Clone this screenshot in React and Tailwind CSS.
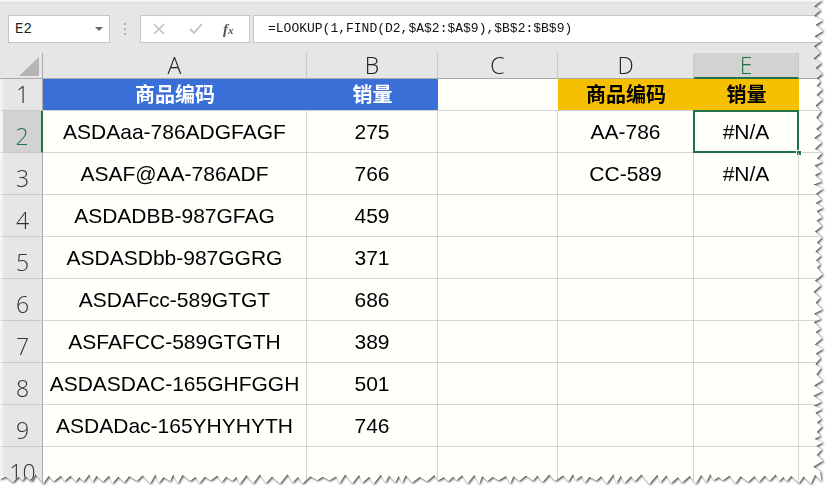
import React from 'react';

const rows = [
  ['ASDAaa-786ADGFAGF', '275', '', 'AA-786', '#N/A'],
  ['ASAF@AA-786ADF', '766', '', 'CC-589', '#N/A'],
  ['ASDADBB-987GFAG', '459', '', '', ''],
  ['ASDASDbb-987GGRG', '371', '', '', ''],
  ['ASDAFcc-589GTGT', '686', '', '', ''],
  ['ASFAFCC-589GTGTH', '389', '', '', ''],
  ['ASDASDAC-165GHFGGH', '501', '', '', ''],
  ['ASDADac-165YHYHYTH', '746', '', '', ''],
  ['', '', '', '', ''],
];

const font = { fontFamily: '"Liberation Sans", "Noto Sans CJK SC", sans-serif' };

// jagged "torn paper" outline along the right and bottom edges
function tornEdge() {
  let seed = 11;
  const rnd = () => {
    seed = (seed * 9301 + 49297) % 233280;
    return seed / 233280;
  };
  const pts = ['0px 0px'];
  let i = 0;
  for (let y = 0; y < 474; y += 3 + rnd() * 4) {
    const x = i % 2 === 0 ? 820 + rnd() * 3 : 813 + rnd() * 4;
    pts.push(`${x.toFixed(1)}px ${y.toFixed(1)}px`);
    i++;
  }
  pts.push('821px 481px');
  i = 0;
  for (let x = 815; x > 0; x -= 3 + rnd() * 5) {
    const y = i % 2 === 0 ? 474 + rnd() * 3 : 480 + rnd() * 4;
    pts.push(`${x.toFixed(1)}px ${y.toFixed(1)}px`);
    i++;
  }
  pts.push('0px 479px');
  return `polygon(${pts.join(',')})`;
}

const clip = tornEdge();

export default function App() {
  return (
    <div className="w-[835px] h-[494px] bg-white overflow-hidden">
      <div className="[filter:drop-shadow(1px_1px_1px_rgba(0,0,0,0.75))]">
        <div className="w-[826px] h-[490px] bg-[#e6e6e6] flex flex-col" style={{ clipPath: clip }}>
          {/* Top strip */}
          <div className="h-[3px] bg-[#f6f6f6] border-b border-[#dcdcdc]" />

          {/* Formula bar */}
          <div className="h-[50px] flex items-start pt-[12px] pl-[8px]">
            <div className="w-[102px] h-[28px] bg-[#fffffd] border border-[#c6c6c6] flex items-center justify-between pl-[6px] pr-[6px]">
              <span className="text-[14px] text-[#222]" style={{ fontFamily: '"Liberation Mono", monospace' }}>E2</span>
              <span className="w-0 h-0 border-l-[4px] border-r-[4px] border-t-[4px] border-l-transparent border-r-transparent border-t-[#666]" />
            </div>
            <div className="w-[30px] h-[28px] flex flex-col items-center justify-center gap-[3px]">
              <span className="w-[2px] h-[2px] bg-[#b0b0b0]" />
              <span className="w-[2px] h-[2px] bg-[#b0b0b0]" />
              <span className="w-[2px] h-[2px] bg-[#b0b0b0]" />
            </div>
            <div className="w-[110px] h-[28px] bg-[#fffffd] border border-[#c6c6c6] flex items-center">
              <svg width="12" height="12" viewBox="0 0 12 12" className="ml-[12px]">
                <path d="M1 1 L11 11 M11 1 L1 11" stroke="#c2c2c2" strokeWidth="1.6" fill="none" />
              </svg>
              <svg width="14" height="12" viewBox="0 0 14 12" className="ml-[24px]">
                <path d="M1 6 L5 10 L13 1" stroke="#c2c2c2" strokeWidth="1.8" fill="none" />
              </svg>
              <span className="ml-[20px] text-[15px] italic font-bold text-[#555]" style={{ fontFamily: '"Liberation Serif", serif' }}>
                f<span className="text-[11px]">x</span>
              </span>
            </div>
            <div className="flex-1 ml-[3px] h-[28px] bg-[#fffffd] border border-[#c6c6c6] flex items-center pl-[14px]">
              <span className="text-[13px] text-[#111] whitespace-nowrap" style={{ fontFamily: '"Liberation Mono", monospace' }}>
                =LOOKUP(1,FIND(D2,$A$2:$A$9),$B$2:$B$9)
              </span>
            </div>
          </div>

          {/* Sheet */}
          <div
            className="grid grid-cols-[43px_264px_131px_120px_136px_105px_1fr] grid-rows-[26px_32px_repeat(9,42px)] bg-[#fffffc]"
            style={{ fontFamily: '"Open Sans", "Noto Sans CJK SC", sans-serif' }}
          >
            {/* Column headers */}
            <div className="relative bg-[#e6e6e6] border-r border-b border-[#a9a9a9]">
              <svg width="20" height="19" viewBox="0 0 20 19" className="absolute right-[3px] bottom-[2px]">
                <polygon points="20,0 20,19 0,19" fill="#b5b5b5" />
              </svg>
            </div>
            {['A', 'B', 'C', 'D'].map((c) => (
              <div key={c} className="bg-[#e6e6e6] border-r border-[#c8c8c8] border-b border-b-[#a9a9a9] flex items-center justify-center text-[23px] font-light text-[#222] leading-none">
                {c}
              </div>
            ))}
            <div className="bg-[#d2d2d2] border-r border-[#c8c8c8] border-b-2 border-b-[#217346] flex items-center justify-center text-[23px] font-light text-[#217346] leading-none">
              E
            </div>
            <div className="bg-[#e6e6e6] border-b border-[#a9a9a9]" />

            {/* Row 1 */}
            <div className="bg-[#e6e6e6] border-l-[3px] border-l-[#f3f3f3] border-r border-r-[#a9a9a9] border-b border-b-[#c8c8c8] flex items-end justify-center text-[23px] font-light text-[#333] leading-none pb-[4px]">
              1
            </div>
            <div className="bg-[#3b6fd8] border-b border-[#d4d4d4] flex items-center justify-center text-white font-bold text-[20px]" style={font}>商品编码</div>
            <div className="bg-[#3b6fd8] border-b border-[#d4d4d4] flex items-center justify-center text-white font-bold text-[20px]" style={font}>销量</div>
            <div className="bg-[#fffffc] border-b border-[#d4d4d4]" />
            <div className="bg-[#f6c000] border-b border-[#d4d4d4] flex items-center justify-center text-black font-bold text-[20px]" style={font}>商品编码</div>
            <div className="bg-[#f6c000] border-b border-[#d4d4d4] flex items-center justify-center text-black font-bold text-[20px]" style={font}>销量</div>
            <div className="bg-[#fffffc] border-b border-[#d4d4d4]" />

            {/* Data rows */}
            {rows.map((r, ri) => {
              const n = ri + 2;
              const sel = n === 2;
              return (
                <React.Fragment key={n}>
                  <div
                    className={
                      sel
                        ? 'bg-[#d2d2d2] border-l-[3px] border-l-[#f3f3f3] border-r-2 border-r-[#217346] border-b border-b-[#c8c8c8] flex items-end justify-center text-[23px] font-light text-[#217346] leading-none pb-[4px]'
                        : 'bg-[#e6e6e6] border-l-[3px] border-l-[#f3f3f3] border-r border-r-[#a9a9a9] border-b border-b-[#c8c8c8] flex items-end justify-center text-[23px] font-light text-[#333] leading-none pb-[4px]'
                    }
                  >
                    {n}
                  </div>
                  {r.map((v, ci) => (
                    <div
                      key={ci}
                      className="relative border-r border-b border-[#d4d4d4] flex items-center justify-center text-[21px] text-black whitespace-nowrap"
                      style={font}
                    >
                      {v}
                      {sel && ci === 4 && (
                        <>
                          <div className="absolute -left-px -top-px -right-px -bottom-px border-2 border-[#217346]" />
                          <div className="absolute -right-[4px] -bottom-[4px] w-[6px] h-[6px] bg-[#217346] border border-white" />
                        </>
                      )}
                    </div>
                  ))}
                  <div className="border-b border-[#d4d4d4]" />
                </React.Fragment>
              );
            })}
          </div>
        </div>
      </div>
    </div>
  );
}
